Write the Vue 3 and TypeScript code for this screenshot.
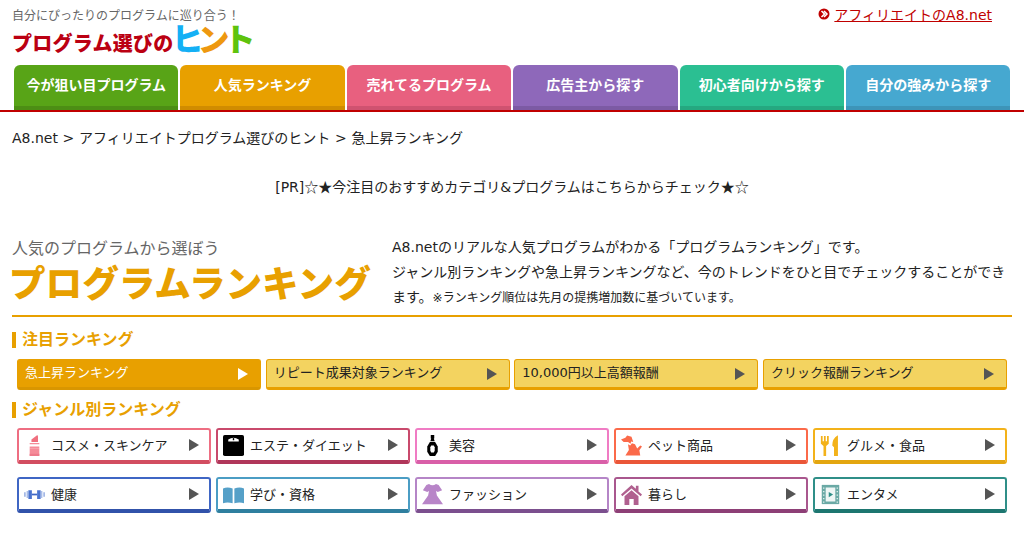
<script setup lang="ts">
interface Shape {
  d: string
  fill: string
}

interface Genre {
  label: string
  color: string
  dark: string
  shapes: Shape[]
}

const tabs = [
  { label: '今が狙い目プログラム', color: '#58a417', dark: '#4c8e14' },
  { label: '人気ランキング', color: '#e8a000', dark: '#d08c00' },
  { label: '売れてるプログラム', color: '#e8607f', dark: '#cf5270' },
  { label: '広告主から探す', color: '#8e68ba', dark: '#7c5aa4' },
  { label: '初心者向けから探す', color: '#2bbf92', dark: '#25a880' },
  { label: '自分の強みから探す', color: '#46a8d0', dark: '#3d94b8' }
]

const featured = [
  { label: '急上昇ランキング', active: true },
  { label: 'リピート成果対象ランキング', active: false },
  { label: '10,000円以上高額報酬', active: false },
  { label: 'クリック報酬ランキング', active: false }
]

const genres: Genre[] = [
  {
    label: 'コスメ・スキンケア',
    color: '#ee6e82',
    dark: '#d24d60',
    shapes: [
      { d: 'M8.5 8 V5 L14.5 0.5 Q16 0 16 2 V8 Z', fill: '#f0707f' },
      { d: 'M6.5 9 H17.5 V10.5 H6.5 Z M6.5 13 H17.5 V15 H6.5 Z', fill: '#f58b98' },
      { d: 'M6.5 15 H17.5 V23 Q17.5 24 16.5 24 H7.5 Q6.5 24 6.5 23 Z', fill: '#f58b98' },
      { d: 'M6.5 21.5 H17.5 V24 H6.5 Z', fill: '#ee7a8a' }
    ]
  },
  {
    label: 'エステ・ダイエット',
    color: '#c94a6c',
    dark: '#b0365a',
    shapes: [
      { d: 'M2 0 H22 Q24 0 24 2 V22 Q24 24 22 24 H2 Q0 24 0 22 V2 Q0 0 2 0 Z', fill: '#000' },
      { d: 'M6 5 Q12 1.5 18 5 V7.5 H6 Z', fill: '#fff' },
      { d: 'M11.2 3.5 H12.8 V6 H11.2 Z', fill: '#000' }
    ]
  },
  {
    label: '美容',
    color: '#f07cc4',
    dark: '#d95fa8',
    shapes: [
      { d: 'M10 0 H14 V4 H13.5 L14.5 7 H9.5 L10.5 4 H10 Z', fill: '#000' },
      { d: 'M9 8 H15 L18 13 V19 L15 24 H9 L6 19 V13 Z', fill: '#000' },
      { d: 'M10.5 12 H13.5 L14.5 14 V18 L13.5 20 H10.5 L9.5 18 V14 Z', fill: '#fff' }
    ]
  },
  {
    label: 'ペット商品',
    color: '#fb6a4a',
    dark: '#ea5638',
    shapes: [
      { d: 'M0 5 L5 3 L7 0.5 L12 2 L14 8 L11.5 7.5 L11 10 L8 8 L3 8 Z', fill: '#fb6a4a' },
      {
        d: 'M8 10.5 L10.5 12 L12.5 9.5 L16 10.5 L18.5 15.5 L22 12 L24 13 L21 17.5 L22 23.5 H5 L9 17 Z',
        fill: '#fb6a4a'
      }
    ]
  },
  {
    label: 'グルメ・食品',
    color: '#f3b21a',
    dark: '#e3a60f',
    shapes: [
      { d: 'M1 1 H3 V7 H4.5 V1 H6.5 V7 H8 V1 H10 V10 L7 12.5 V24 H4 V12.5 L1 10 Z', fill: '#f3b21a' },
      { d: 'M16 24 V14 L14 12 Q14 4 20 0.5 H20.5 V24 Z', fill: '#f3b21a' }
    ]
  },
  {
    label: '健康',
    color: '#3f66c4',
    dark: '#3152aa',
    shapes: [
      { d: 'M0 9.5 H2 V14.5 H0 Z M3 8 H4.5 V16 H3 Z', fill: '#a5b9e6' },
      { d: 'M5 7 H9 V17 H5 Z M15 7 H19 V17 H15 Z', fill: '#4a73cf' },
      { d: 'M9 11 H15 V13 H9 Z', fill: '#3f66c4' },
      { d: 'M19.5 8 H21 V16 H19.5 Z M22 9.5 H24 V14.5 H22 Z', fill: '#a5b9e6' }
    ]
  },
  {
    label: '学び・資格',
    color: '#4b9dc4',
    dark: '#2f7f9f',
    shapes: [
      { d: 'M0 5 Q5 3 11 5 V22 Q5 20 0 22 Z', fill: '#55a0c8' },
      { d: 'M13 5 Q19 3 24 5 V22 Q19 20 13 22 Z', fill: '#55a0c8' }
    ]
  },
  {
    label: 'ファッション',
    color: '#b585c7',
    dark: '#7b4f8e',
    shapes: [
      {
        d: 'M8 0 Q12 3 16 0 L19 1 L23 7 L18 9 L16 8 L17 13 L24 23 H0 L7 13 L8 8 L6 9 L1 7 L5 1 Z',
        fill: '#b885c8'
      }
    ]
  },
  {
    label: '暮らし',
    color: '#a9578e',
    dark: '#8d3f76',
    shapes: [
      {
        d: 'M12 1 L17 5.5 V2 H20 V8.5 L24 12 L22.5 14 L12 5 L1.5 14 L0 12 Z M4 14 L12 7 L20 14 V24 H14.5 V17 H9.5 V24 H4 Z',
        fill: '#b0608f'
      }
    ]
  },
  {
    label: 'エンタメ',
    color: '#2f8f88',
    dark: '#1d7670',
    shapes: [
      { d: 'M2 1 H22 V23 H2 Z', fill: '#6aa9a5' },
      { d: 'M3.5 4 H5 V5.5 H3.5 Z M3.5 8 H5 V9.5 H3.5 Z M3.5 12 H5 V13.5 H3.5 Z M3.5 16 H5 V17.5 H3.5 Z M3.5 20 H5 V21.5 H3.5 Z M19 4 H20.5 V5.5 H19 Z M19 8 H20.5 V9.5 H19 Z M19 12 H20.5 V13.5 H19 Z M19 16 H20.5 V17.5 H19 Z M19 20 H20.5 V21.5 H19 Z', fill: '#e6f2f1' },
      { d: 'M6.5 4 H17.5 V20 H6.5 Z', fill: '#eef6f5' },
      { d: 'M10 9 L15 12 L10 15 Z', fill: '#2f8f88' }
    ]
  }
]
</script>

<template>
  <div class="page">
    <header class="top">
      <div class="brand">
        <p class="tagline">自分にぴったりのプログラムに巡り合う！</p>
        <p class="logo">プログラム選びの<span class="hint"><span class="hint-blue">ヒ</span><span class="hint-orange">ン</span><span class="hint-green">ト</span></span></p>
      </div>
      <a class="a8-link" href="#">
        <svg class="a8-icon" viewBox="0 0 12 12">
          <circle cx="6" cy="6" r="5.5" fill="#c00000" />
          <path d="M3.5 3 L6.5 6 L3.5 9 M6 3 L9 6 L6 9" fill="none" stroke="#fff" stroke-width="1.5" />
        </svg>
        <span class="a8-text">アフィリエイトのA8.net</span>
      </a>
    </header>

    <nav class="tabs">
      <a
        v-for="tab in tabs"
        :key="tab.label"
        class="tab"
        href="#"
        :style="{ background: tab.color, borderBottomColor: tab.dark }"
      >{{ tab.label }}</a>
    </nav>

    <main class="content">
      <p class="crumbs">A8.net &gt; アフィリエイトプログラム選びのヒント &gt; 急上昇ランキング</p>
      <p class="pr">[PR]<span class="stars">☆★</span>今注目のおすすめカテゴリ&amp;プログラムはこちらからチェック<span class="stars">★☆</span></p>

      <section class="intro">
        <div class="intro-title">
          <p class="intro-sub">人気のプログラムから選ぼう</p>
          <h1 class="intro-main">プログラムランキング</h1>
        </div>
        <div class="intro-text">
          A8.netのリアルな人気プログラムがわかる「プログラムランキング」です。<br />
          ジャンル別ランキングや急上昇ランキングなど、今のトレンドをひと目でチェックすることができます。<span class="note">※ランキング順位は先月の提携増加数に基づいています。</span>
        </div>
      </section>

      <h2 class="heading">注目ランキング</h2>
      <div class="featured">
        <a
          v-for="item in featured"
          :key="item.label"
          class="feature"
          :class="{ active: item.active }"
          href="#"
        >
          <span class="feature-label">{{ item.label }}</span>
          <i class="arrow"></i>
        </a>
      </div>

      <h2 class="heading genre-heading">ジャンル別ランキング</h2>
      <div class="genres">
        <a
          v-for="genre in genres"
          :key="genre.label"
          class="genre"
          href="#"
          :style="{ borderColor: genre.color, borderBottomColor: genre.dark }"
        >
          <svg class="genre-icon" viewBox="0 0 24 24">
            <path v-for="(shape, i) in genre.shapes" :key="i" :d="shape.d" :fill="shape.fill" />
          </svg>
          <span class="genre-label">{{ genre.label }}</span>
          <i class="arrow"></i>
        </a>
      </div>
    </main>
  </div>
</template>

<style>
html,
body {
  margin: 0;
  background: #fff;
}
</style>

<style scoped>
.page {
  width: 1024px;
  height: 534px;
  overflow: hidden;
  font-family: "DejaVu Sans", "Noto Sans CJK JP", sans-serif;
  font-size: 14px;
  color: #222;
}

p,
h1,
h2 {
  margin: 0;
}

a {
  text-decoration: none;
  color: inherit;
}

.top {
  display: flex;
  justify-content: space-between;
  height: 65px;
  padding: 0 32px 0 12px;
  box-sizing: border-box;
}

.tagline {
  padding-top: 8px;
  font-size: 12px;
  line-height: 16px;
  color: #666;
}

.logo {
  display: flex;
  align-items: baseline;
  height: 33px;
  font-size: 20px;
  font-weight: 900;
  line-height: 33px;
  letter-spacing: 0.25px;
  color: #bb0012;
}

.hint {
  margin-left: -2px;
  font-size: 32px;
  font-weight: 900;
  letter-spacing: -6px;
}

.hint-blue {
  color: #14b0f5;
}

.hint-orange {
  color: #ee980f;
}

.hint-green {
  color: #5fc30d;
}

.a8-link {
  display: flex;
  align-items: center;
  gap: 4px;
  height: 18px;
  margin-top: 5px;
  color: #c00000;
}

.a8-icon {
  width: 12px;
  height: 12px;
}

.a8-text {
  text-decoration: underline;
}

.tabs {
  display: flex;
  gap: 2px;
  height: 47px;
  padding-left: 14px;
  box-sizing: border-box;
  border-bottom: 2px solid #c00000;
}

.tab {
  display: block;
  width: 164.4px;
  box-sizing: border-box;
  padding-top: 10px;
  border-bottom: 4px solid;
  border-radius: 6px 6px 0 0;
  font-size: 14px;
  font-weight: 700;
  line-height: 20px;
  text-align: center;
  color: #fff;
}

.content {
  width: 1000px;
  margin-left: 12px;
}

.crumbs {
  padding-top: 15px;
  line-height: 22px;
  word-spacing: 0.25px;
}

.pr {
  padding-top: 26px;
  line-height: 22px;
  text-align: center;
}

.stars {
  font-family: "Noto Sans CJK JP", sans-serif;
}

.intro {
  display: flex;
  gap: 21px;
  height: 88px;
  margin-top: 31px;
  box-sizing: border-box;
  border-bottom: 2px solid #e8a000;
}

.intro-title {
  flex: none;
  width: 359px;
}

.intro-sub {
  padding-top: 8px;
  font-size: 16px;
  line-height: 24px;
  color: #666;
}

.intro-main {
  margin-left: -3px;
  font-size: 36.6px;
  font-weight: 900;
  line-height: 48px;
  white-space: nowrap;
  color: #e8a000;
}

.intro-text {
  flex: 1;
  padding-top: 6px;
  line-height: 25px;
}

.note {
  font-size: 12px;
}

.heading {
  height: 16px;
  margin-top: 15px;
  padding-left: 6px;
  border-left: 4px solid #e8a000;
  font-size: 16px;
  font-weight: 700;
  line-height: 16px;
  color: #e8a000;
}

.genre-heading {
  margin-top: 12px;
}

.featured {
  display: grid;
  grid-template-columns: repeat(4, 244px);
  gap: 4.67px;
  margin: 11px 0 0 5px;
}

.feature {
  display: flex;
  align-items: center;
  justify-content: space-between;
  height: 31px;
  box-sizing: border-box;
  padding: 0 12px 0 7px;
  border: 1px solid #e8a000;
  border-bottom-width: 3px;
  border-radius: 3px;
  background: #f3d360;
  font-size: 13px;
}

.feature-label {
  margin-top: -4px;
}

.feature.active {
  background: #e8a000;
  border-bottom-color: #d99600;
  color: #fff;
}

.arrow {
  flex: none;
  width: 0;
  height: 0;
  border-style: solid;
  border-width: 6px 0 6px 10px;
  border-color: transparent transparent transparent #555;
}

.feature.active .arrow {
  border-left-color: #fff;
}

.genres {
  display: grid;
  grid-template-columns: repeat(5, 194px);
  gap: 13px 5px;
  margin: 10px 0 0 5px;
}

.genre {
  display: flex;
  align-items: center;
  height: 36px;
  box-sizing: border-box;
  padding: 0 10px 2px 5px;
  border: 2px solid;
  border-bottom-width: 4px;
  border-radius: 3px;
  font-size: 13px;
}

.genre .arrow {
  margin-top: 2px;
}

.genre-icon {
  flex: none;
  width: 21px;
  height: 21px;
  margin: 3px 6px 0 0;
}

.genre-label {
  flex: 1;
}
</style>
